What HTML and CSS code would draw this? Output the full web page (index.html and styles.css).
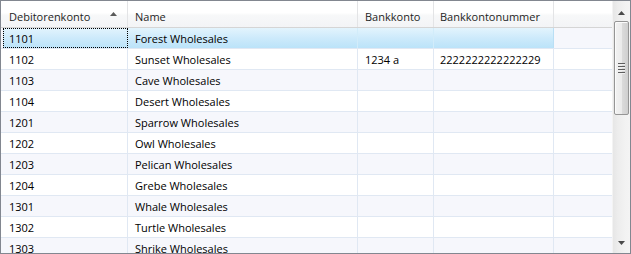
FILE: index.html
```html
<!DOCTYPE html>
<html>
<head>
<meta charset="utf-8">
<link rel="stylesheet" href="styles.css">
</head>
<body>
<div class="grid">
  <div class="main">
    <div class="hdr cols">
      <div class="hc c1"><span>Debitorenkonto</span><svg class="sort" width="7" height="4" viewBox="0 0 7 4"><path d="M3.5 0 L7 4 L0 4 Z" fill="#5a5a5a"/></svg></div>
      <div class="hc c2">Name</div>
      <div class="hc c3">Bankkonto</div>
      <div class="hc c4">Bankkontonummer</div>
      <div class="hc c5"></div>
    </div>
    <div class="rows">
      <div class="row cols sel"><div class="cell c1 focus">1101</div><div class="cell c2">Forest Wholesales</div><div class="cell c3"></div><div class="cell c4"></div><div class="cell c5"></div></div>
      <div class="row cols"><div class="cell c1">1102</div><div class="cell c2">Sunset Wholesales</div><div class="cell c3">1234 a</div><div class="cell c4">2222222222222229</div><div class="cell c5"></div></div>
      <div class="row cols alt"><div class="cell c1">1103</div><div class="cell c2">Cave Wholesales</div><div class="cell c3"></div><div class="cell c4"></div><div class="cell c5"></div></div>
      <div class="row cols"><div class="cell c1">1104</div><div class="cell c2">Desert Wholesales</div><div class="cell c3"></div><div class="cell c4"></div><div class="cell c5"></div></div>
      <div class="row cols alt"><div class="cell c1">1201</div><div class="cell c2">Sparrow Wholesales</div><div class="cell c3"></div><div class="cell c4"></div><div class="cell c5"></div></div>
      <div class="row cols"><div class="cell c1">1202</div><div class="cell c2">Owl Wholesales</div><div class="cell c3"></div><div class="cell c4"></div><div class="cell c5"></div></div>
      <div class="row cols alt"><div class="cell c1">1203</div><div class="cell c2">Pelican Wholesales</div><div class="cell c3"></div><div class="cell c4"></div><div class="cell c5"></div></div>
      <div class="row cols"><div class="cell c1">1204</div><div class="cell c2">Grebe Wholesales</div><div class="cell c3"></div><div class="cell c4"></div><div class="cell c5"></div></div>
      <div class="row cols alt"><div class="cell c1">1301</div><div class="cell c2">Whale Wholesales</div><div class="cell c3"></div><div class="cell c4"></div><div class="cell c5"></div></div>
      <div class="row cols"><div class="cell c1">1302</div><div class="cell c2">Turtle Wholesales</div><div class="cell c3"></div><div class="cell c4"></div><div class="cell c5"></div></div>
      <div class="row cols alt"><div class="cell c1">1303</div><div class="cell c2">Shrike Wholesales</div><div class="cell c3"></div><div class="cell c4"></div><div class="cell c5"></div></div>
    </div>
  </div>
  <div class="vscroll">
    <div class="arrow up"><svg width="7" height="4" viewBox="0 0 7 4"><path d="M3.5 0 L7 4 L0 4 Z" fill="#4a4a4a"/></svg></div>
    <div class="track">
      <div class="thumb">
        <div class="grip"><i></i><i></i><i></i><i></i></div>
      </div>
    </div>
    <div class="arrow down"><svg width="7" height="4" viewBox="0 0 7 4"><path d="M0 0 L7 0 L3.5 4 Z" fill="#4a4a4a"/></svg></div>
  </div>
</div>
</body>
</html>
```

FILE: styles.css
```css
html, body {
  margin: 0;
  padding: 0;
  background: #ffffff;
}

.grid {
  width: 631px;
  height: 254px;
  box-sizing: border-box;
  border: 1px solid #828790;
  display: flex;
  overflow: hidden;
  font-family: "Open Sans", "Noto Sans", sans-serif;
  font-size: 11px;
  color: #000;
  background: #fff;
}

.main {
  flex: 1;
  display: flex;
  flex-direction: column;
  overflow: hidden;
}

.cols {
  display: grid;
  grid-template-columns: 127px 230px 76px 120px 1fr;
}

.hdr {
  height: 27px;
  box-sizing: border-box;
  border-bottom: 1px solid #d5d5d5;
  background: linear-gradient(#ffffff 0%, #ffffff 45%, #f7f8f9 55%, #f3f4f6 100%);
  flex: none;
}

.hc {
  border-right: 1px solid #e3e4e6;
  display: flex;
  align-items: center;
  padding: 4px 0 0 7px;
  white-space: nowrap;
  color: #1e1e1e;
}

.hc.c1 {
  padding-left: 8px;
  position: relative;
}

.hc.c4 {
  padding-left: 6px;
}

.hc.c5 {
  border-right: none;
}

.sort {
  position: absolute;
  left: 109px;
  top: 11px;
}

.rows {
  flex: 1;
  overflow: hidden;
}

.row {
  height: 21px;
  box-sizing: border-box;
  border-bottom: 1px solid #e0e8f3;
  background: #fff;
}

.row.alt {
  background: #f6f7fc;
}

.cell {
  border-right: 1px solid #e0e8f3;
  display: flex;
  align-items: center;
  padding-left: 7px;
  white-space: nowrap;
  box-sizing: border-box;
}

.cell.c1 {
  padding-left: 8px;
}

.cell.c4 {
  padding-left: 6px;
}

.cell.c5 {
  border-right: none;
}

.row.sel {
  background: #f6f7fc;
}

.row.sel .c1,
.row.sel .c2,
.row.sel .c3,
.row.sel .c4 {
  background: linear-gradient(#e3f4fd 0%, #cdeafb 50%, #bbe3f9 100%);
  border-right-color: #d2ecfa;
}

.row.sel .c4 {
  border-right-color: #b9dff5;
}

.cell.focus {
  outline: 1px dotted #000;
  outline-offset: -1px;
  margin-left: 2px;
  padding-left: 6px;
}

.vscroll {
  width: 17px;
  flex: none;
  display: flex;
  flex-direction: column;
  background: linear-gradient(90deg, #e6e6e6 0%, #ededed 30%, #f2f2f2 70%, #f4f4f4 100%);
  border-left: 1px solid #f3f3f3;
}

.arrow {
  height: 17px;
  display: flex;
  justify-content: center;
  flex: none;
}

.arrow.up {
  align-items: flex-end;
  padding-bottom: 3px;
  box-sizing: border-box;
}

.arrow.down {
  align-items: flex-start;
  padding-top: 5px;
  box-sizing: border-box;
}

.track {
  flex: 1;
  padding-top: 3px;
}

.thumb {
  margin: 0 1px 0 1px;
  height: 94px;
  box-sizing: border-box;
  border: 1px solid #959595;
  border-radius: 2px;
  background: linear-gradient(90deg, #f2f2f2 0%, #ebebeb 50%, #dcdcdc 51%, #cfcfcf 100%);
  box-shadow: inset 1px 1px 0 #fbfbfb;
  display: flex;
  align-items: center;
  justify-content: center;
}

.grip {
  display: flex;
  flex-direction: column;
  gap: 1px;
}

.grip i {
  display: block;
  width: 7px;
  height: 1px;
  background: #5e5e5e;
  border-bottom: 1px solid #f0f0f0;
}
```
